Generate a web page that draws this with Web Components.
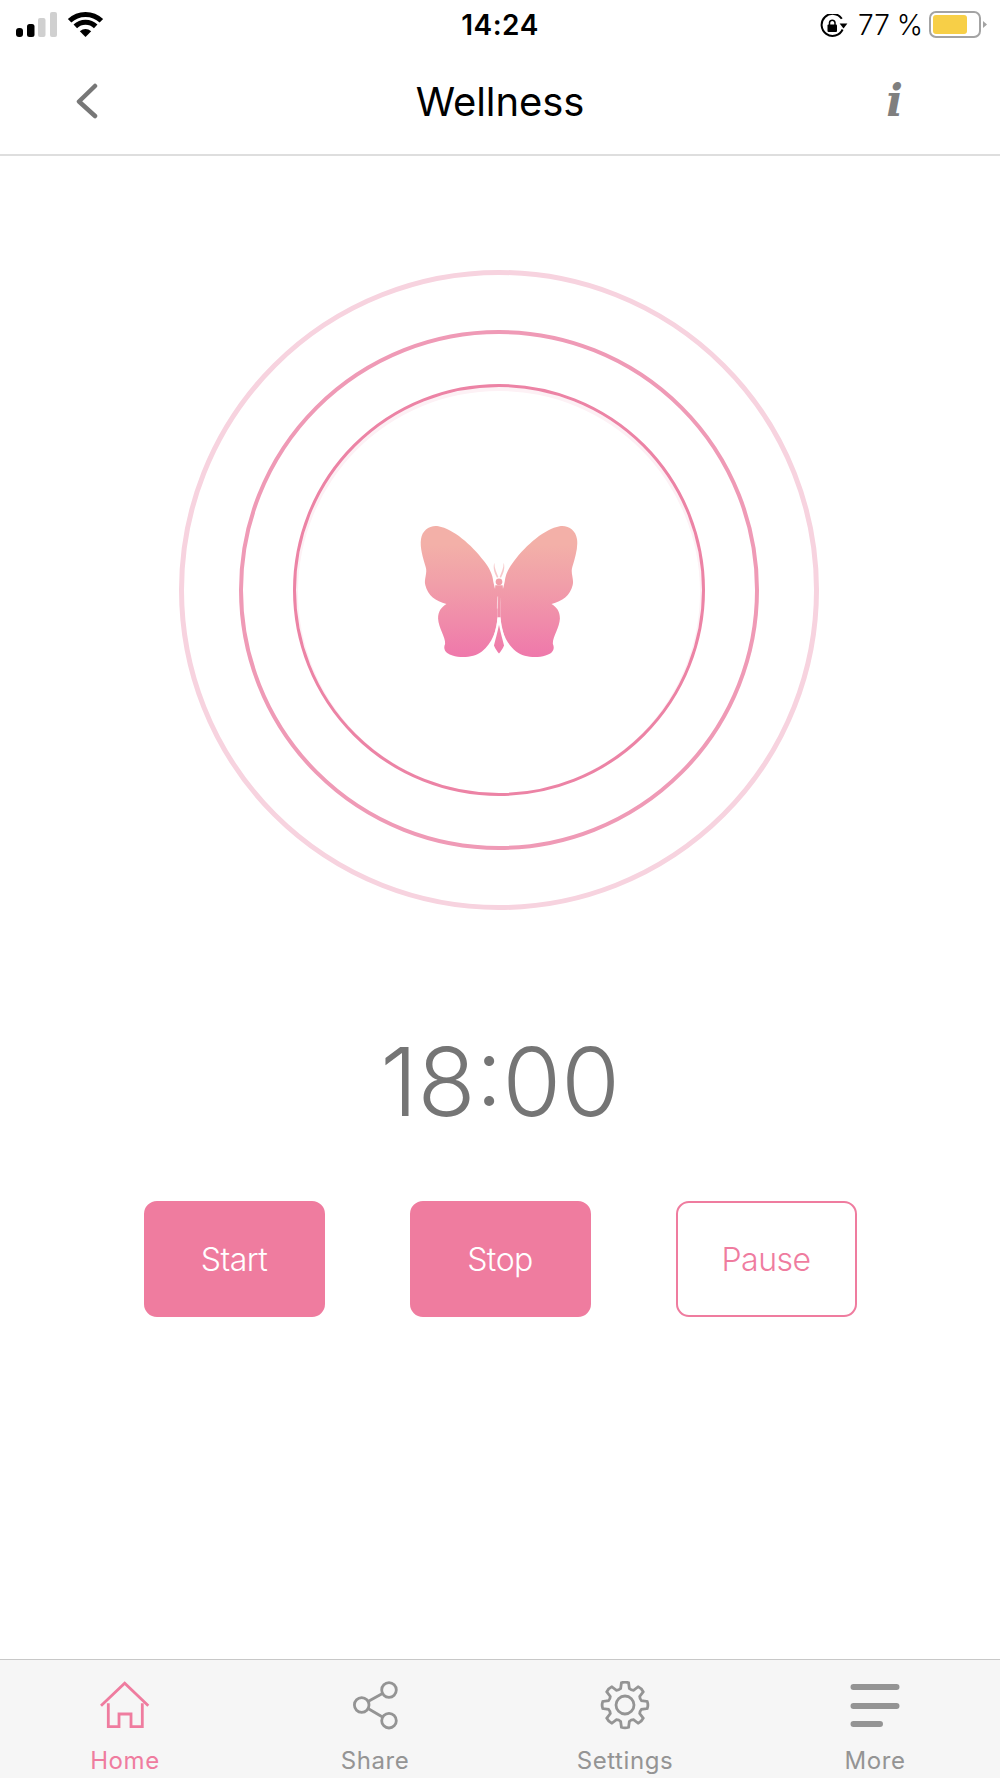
<!DOCTYPE html>
<html lang="en">
<head>
<meta charset="utf-8">
<title>Wellness</title>
<style>
  html, body { margin: 0; background: #fff; }
  body { font-family: Inter, "Liberation Sans", sans-serif; }
</style>
</head>
<body>
<wellness-app></wellness-app>

<script>
// Top strip with signal, clock, rotation lock and battery.
class StatusBar extends HTMLElement {
    connectedCallback() {
        this.attachShadow({ mode: "open" }).innerHTML = `
            <style>
                :host { display: grid; grid-template-columns: 1fr auto 1fr; height: 50px; color: #000; }
                .left { display: flex; align-items: flex-start; padding: 10px 0 0 16px; }
                .signal { margin-top: 1px; }
                .wifi { margin-left: 7px; }
                .time { font-size: 28px; font-weight: 600; line-height: 50px; letter-spacing: .5px; }
                .right { display: flex; justify-content: flex-end; align-items: flex-start; padding: 11px 13px 0 0; }
                .lock { margin-top: 3px; }
                .pct { font-size: 28px; font-weight: 300; line-height: 28px; margin: 0 6px 0 10px; word-spacing: -1px; }
            </style>
            <div class="left">
                <svg class="signal" width="44" height="27" viewBox="0 0 44 27">
                    <rect x="0" y="17" width="7" height="9" rx="3" fill="#000"/>
                    <rect x="11" y="13" width="7.5" height="13" rx="2.5" fill="#000"/>
                    <rect x="22" y="7" width="7.5" height="19" rx="2" fill="#d0d0d0"/>
                    <rect x="34" y="1" width="7" height="25" rx="2" fill="#d0d0d0"/>
                </svg>
                <svg class="wifi" width="37" height="27" viewBox="0 0 37 27">
                    <path d="M2.6 10.8A23 23 0 0 1 34.4 10.8" fill="none" stroke="#000" stroke-width="5"/>
                    <path d="M8.3 16.4A14.5 14.5 0 0 1 28.7 16.4" fill="none" stroke="#000" stroke-width="5"/>
                    <path d="M12.8 21.2Q18.5 16.8 24.2 21.2L18.5 27Z" fill="#000"/>
                </svg>
            </div>
            <div class="time"><slot></slot></div>
            <div class="right">
                <svg class="lock" width="28" height="24" viewBox="0 0 28 24">
                    <path d="M22.6 15.5A11 11 0 1 1 21.8 4.8" fill="none" stroke="#000" stroke-width="2"/>
                    <path d="M19.6 9.6L27.4 9.6L23.5 14.4Z" fill="#000"/>
                    <rect x="7.5" y="10.5" width="9.5" height="7.5" rx="1" fill="#000"/>
                    <path d="M9.5 11V8.6a2.8 2.8 0 0 1 5.5 0V11" fill="none" stroke="#000" stroke-width="1.5"/>
                </svg>
                <span class="pct">77 %</span>
                <svg width="58" height="28" viewBox="0 0 58 28">
                    <rect x="1" y="1" width="50" height="25" rx="6" fill="#fff" stroke="#a3a3a3" stroke-width="2"/>
                    <rect x="4" y="4" width="34" height="19" rx="3" fill="#f7cf47"/>
                    <path d="M54 10L58 13.5L54 17Z" fill="#a3a3a3"/>
                </svg>
            </div>`;
    }
}

// Title row with back chevron and info mark.
class NavHeader extends HTMLElement {
    connectedCallback() {
        this.attachShadow({ mode: "open" }).innerHTML = `
            <style>
                :host { display: grid; grid-template-columns: 1fr auto 1fr; align-items: center; height: 106px; box-sizing: border-box;
                        padding: 0 0 2px 76px; border-bottom: 2px solid #dedede; }
                .title { font-size: 40px; font-weight: 400; color: #000; letter-spacing: -.1px; margin-left: -76px; }
                .info { justify-self: end; margin-right: 97px; font-family: "DejaVu Serif", serif; font-style: italic; font-weight: 700;
                        font-size: 44px; color: #7f7f7f; line-height: 1; }
            </style>
            <svg width="22" height="36" viewBox="0 0 22 36">
                <path d="M19 3L3 18.5L19 33" fill="none" stroke="#777" stroke-width="4.5" stroke-linecap="round" stroke-linejoin="round"/>
            </svg>
            <div class="title"><slot></slot></div>
            <div class="info">i</div>`;
    }
}

// A ring that centres whatever is slotted in it. Nested to make the target.
class PulseRing extends HTMLElement {
    static observedAttributes = ["size", "weight", "tone", "halo"]

    connectedCallback() {
        if (!this.shadowRoot) this.attachShadow({ mode: "open" });
        this.render();
    }

    attributeChangedCallback() {
        this.render();
    }

    render() {
        if (this.shadowRoot) {
            const halo = this.getAttribute("halo");
            this.shadowRoot.innerHTML = `
                <style>
                    :host { display: flex; align-items: center; justify-content: center; box-sizing: border-box; border-radius: 50%;
                            width: ${this.getAttribute("size")}px; height: ${this.getAttribute("size")}px;
                            border: ${this.getAttribute("weight")}px solid ${this.getAttribute("tone")};
                            ${halo ? `box-shadow: inset 0 2px 0 2px ${halo};` : ""} }
                </style>
                <slot></slot>`;
        }
    }
}

// The butterfly in the middle of the rings.
class ButterflyMark extends HTMLElement {
    connectedCallback() {
        this.attachShadow({ mode: "open" }).innerHTML = `
            <style>:host { display: block; width: 162px; height: 135px; margin-top: 2px; }</style>
            <svg width="162" height="135" viewBox="55 40 484 402">
                <defs>
                    <linearGradient id="wing" gradientUnits="userSpaceOnUse" x1="0" y1="100" x2="0" y2="437">
                        <stop offset="0" stop-color="#f3b0a8"/>
                        <stop offset=".35" stop-color="#f19fa9"/>
                        <stop offset="1" stop-color="#ef78ab"/>
                    </linearGradient>
                    <path id="half" d="M292 318C292 356 276 396 246 420C224 437 186 441 158 432C134 426 130 410 136 398C138 378 116 350 115 322C115 300 124 288 140 278C108 270 84 252 77 222C72 205 84 186 78 168C70 140 60 110 64 84C68 58 90 42 116 46C160 54 214 100 252 150C268 170 278 190 280 212C284 232 290 250 292 262Z"/>
                </defs>
                <g fill="url(#wing)">
                    <use href="#half"/>
                    <use href="#half" transform="translate(594 0) scale(-1 1)"/>
                    <rect x="292" y="262" width="10" height="56"/>
                    <circle cx="297" cy="212" r="10"/>
                    <path d="M286 222H308L311 262H302L297 292L292 262H283Z"/>
                    <path d="M297 340C292 366 286 384 282 402C286 412 292 420 297 426C302 420 308 412 312 402C308 384 302 366 297 340Z"/>
                    <path d="M291 200C284 186 278 172 283 155C283 172 290 184 295 198Z" opacity=".6"/>
                    <path d="M303 200C310 186 316 172 311 155C311 172 304 184 299 198Z" opacity=".6"/>
                </g>
                <path d="M293 256L292 292" stroke="#fff" stroke-width="1.5" fill="none"/>
                <path d="M294 322C290 352 282 376 276 398" stroke="#fff" stroke-width="2.5" fill="none"/>
                <path d="M300 322C304 352 312 376 318 398" stroke="#fff" stroke-width="2.5" fill="none"/>
            </svg>`;
    }
}

// Rounded action button, filled or outlined.
class ActionButton extends HTMLElement {
    connectedCallback() {
        const outlined = this.hasAttribute("outline");
        this.attachShadow({ mode: "open" }).innerHTML = `
            <style>
                :host { display: flex; align-items: center; justify-content: center; box-sizing: border-box; width: 181px; height: 116px;
                        border-radius: 13px; font-size: 32px; font-weight: 300; letter-spacing: -.5px;
                        border: 2.5px solid #ef7c9f;
                        background: ${outlined ? "#fff" : "#ef7c9f"}; color: ${outlined ? "#ef7c9f" : "#fff"}; }
            </style>
            <slot></slot>`;
    }
}

// One tab: an icon over a label.
class TabItem extends HTMLElement {
    static icons = {
        home: `<path d="M1 24.7L24.7 2.3L48.3 24.7" /><path d="M8.3 22.3V45.7H19V33H31V45.7H42.3V22.3" />`,
        share: `<circle cx="39" cy="9" r="7.3"/><circle cx="11.7" cy="24" r="7.3"/><circle cx="39" cy="39.7" r="7.3"/>
                 <path d="M18 20.5L32.5 12.5M18 27.5L32.5 36"/>`,
        more: `<path d="M3.5 6H46.5M3.5 25H46.5M3.5 43H30" stroke-width="6" stroke-linecap="round"/>`
    }

    // Eight rounded teeth around a hole.
    gear() {
        let d = "";
        const at = (r, a) => (25 + r * Math.sin(a)).toFixed(2) + " " + (24 - r * Math.cos(a)).toFixed(2);
        for (let i = 0; i < 8; i++) {
            const a = i * Math.PI / 4;
            d += (i ? "L" : "M") + at(22.5, a - .16) + "Q" + at(23.6, a) + " " + at(22.5, a + .16)
               + "L" + at(17, a + .26) + "Q" + at(16, a + Math.PI / 8) + " " + at(17, a + Math.PI / 4 - .26);
        }
        return `<path d="${d}Z"/><circle cx="25" cy="24" r="9"/>`;
    }

    connectedCallback() {
        const name = this.getAttribute("icon");
        const active = this.hasAttribute("active");
        const art = name === "gear" ? this.gear() : TabItem.icons[name];
        this.attachShadow({ mode: "open" }).innerHTML = `
            <style>
                :host { display: flex; flex-direction: column; align-items: center; color: ${active ? "#ef7c9f" : "#949494"}; }
                svg { display: block; }
                .label { font-size: 24px; font-weight: 400; letter-spacing: .6px; line-height: 28px; margin-top: 16px; }
            </style>
            <svg width="50" height="50" viewBox="0 0 50 50" fill="none" stroke="currentColor" stroke-width="2.8">${art}</svg>
            <div class="label"><slot></slot></div>`;
    }
}

// The screen itself.
class WellnessApp extends HTMLElement {
    connectedCallback() {
        this.attachShadow({ mode: "open" }).innerHTML = `
            <style>
                :host { display: flex; flex-direction: column; height: 1778px; overflow: hidden; background: #fff; }
                main { flex: 1; display: flex; flex-direction: column; align-items: center; padding-top: 114px; }
                .target { margin-right: 2px; }
                .timer { font-size: 95px; font-weight: 300; color: #757575; line-height: 1; margin-top: 124px; }
                .actions { display: flex; gap: 85px; margin-top: 72px; }
                nav { display: grid; grid-template-columns: repeat(4, 1fr); height: 119px; box-sizing: border-box;
                      border-top: 1.5px solid #c8c8c8; background: #f6f6f6; padding-top: 21px; }
            </style>
            <status-bar>14:24</status-bar>
            <nav-header>Wellness</nav-header>
            <main>
                <pulse-ring class="target" size="640" weight="5" tone="#f7d3df">
                    <pulse-ring size="520" weight="4" tone="#ef9ab6">
                        <pulse-ring size="412" weight="3" tone="#ec83a5" halo="#fdf1f5">
                            <butterfly-mark></butterfly-mark>
                        </pulse-ring>
                    </pulse-ring>
                </pulse-ring>
                <div class="timer">18:00</div>
                <div class="actions">
                    <action-button>Start</action-button>
                    <action-button>Stop</action-button>
                    <action-button outline>Pause</action-button>
                </div>
            </main>
            <nav>
                <tab-item icon="home" active>Home</tab-item>
                <tab-item icon="share">Share</tab-item>
                <tab-item icon="gear">Settings</tab-item>
                <tab-item icon="more">More</tab-item>
            </nav>`;
    }
}

customElements.define("status-bar", StatusBar);
customElements.define("nav-header", NavHeader);
customElements.define("pulse-ring", PulseRing);
customElements.define("butterfly-mark", ButterflyMark);
customElements.define("action-button", ActionButton);
customElements.define("tab-item", TabItem);
customElements.define("wellness-app", WellnessApp);
</script>
</body>
</html>
